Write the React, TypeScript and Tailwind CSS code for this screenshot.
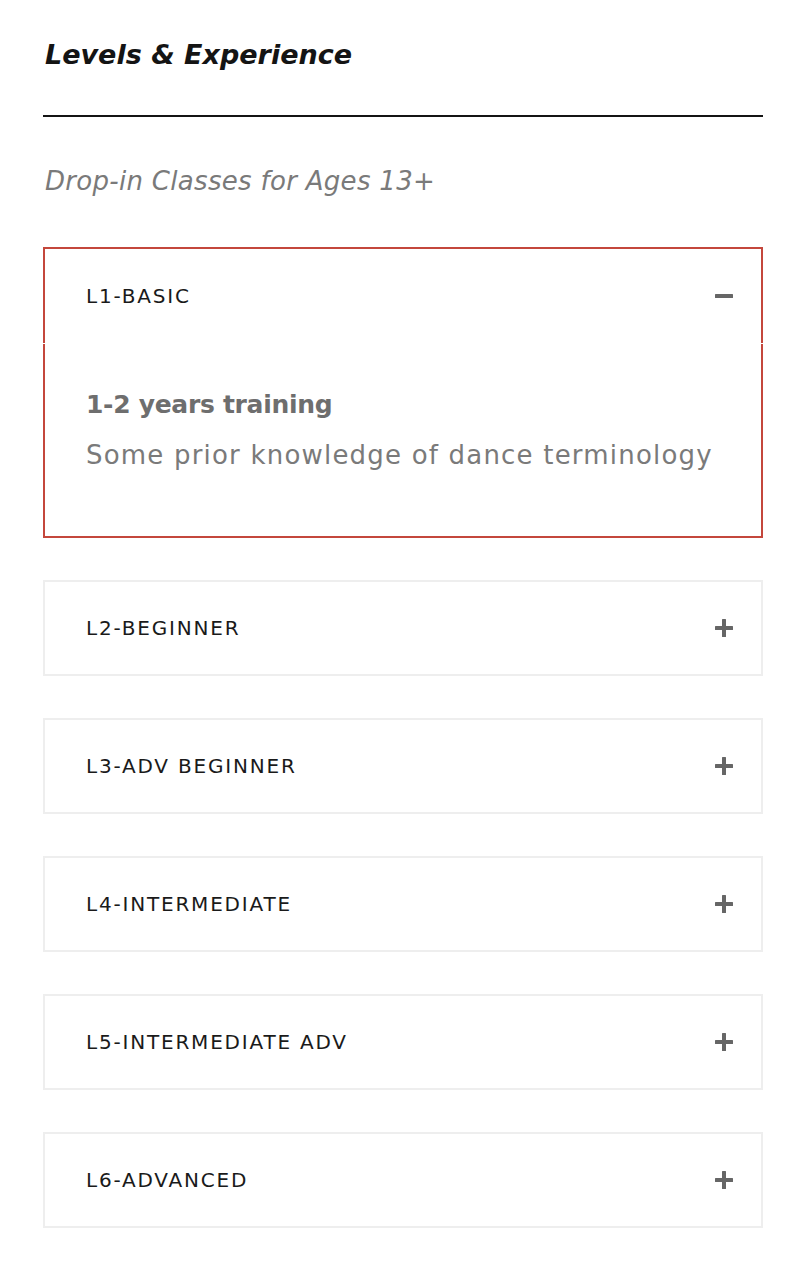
const levels = [
  'L1-BASIC',
  'L2-BEGINNER',
  'L3-ADV BEGINNER',
  'L4-INTERMEDIATE',
  'L5-INTERMEDIATE ADV',
  'L6-ADVANCED',
]

function PlusIcon({ open }: { open: boolean }) {
  return (
    <svg width="18" height="18" viewBox="0 0 18 18" className="shrink-0">
      <rect x="0" y="7" width="18" height="4" rx="0.5" fill="#666666" />
      {!open && <rect x="7" y="0" width="4" height="18" rx="0.5" fill="#666666" />}
    </svg>
  )
}

function Header({ label, open }: { label: string; open: boolean }) {
  return (
    <div
      className={`h-[96px] flex items-center justify-between pl-[41px] pr-[28px] border-2 ${
        open ? 'border-[#c4473c] border-b-0' : 'border-[#eeeeee]'
      }`}
    >
      <span className="text-[20px] text-[#1a1a1a] tracking-[1.8px]">{label}</span>
      <PlusIcon open={open} />
    </div>
  )
}

export default function App() {
  return (
    <div className="bg-white min-h-[1273px] pl-[43px] pr-[42px] pt-[37px]" style={{ fontFamily: '"DejaVu Sans", "Liberation Sans", sans-serif' }}>
      <h2 className="text-[27px] font-bold italic text-[#141414] leading-[36px] pl-[2px]">
        Levels &amp; Experience
      </h2>
      <div className="mt-[42px] h-[2px] bg-[#141414]" />
      <p className="mt-[47px] text-[26px] italic font-light text-[#7a7a7a] leading-[34px] pl-[2px] tracking-[0.3px]">
        Drop-in Classes for Ages 13+
      </p>

      <div className="mt-[49px] flex flex-col gap-[42px]">
        {levels.map((label, i) =>
          i === 0 ? (
            <div key={label}>
              <Header label={label} open />
              <div className="mt-px border-2 border-t-0 border-[#c4473c] pl-[41px] pr-[28px] pt-[42px] h-[194px]">
                <div className="text-[25px] font-bold text-[#6e6e6e] leading-[38px] tracking-[-0.3px]">1-2 years training</div>
                <div className="mt-[12px] text-[26px] text-[#7a7a7a] leading-[38px] tracking-[1.2px]">
                  Some prior knowledge of dance terminology
                </div>
              </div>
            </div>
          ) : (
            <Header key={label} label={label} open={false} />
          )
        )}
      </div>
    </div>
  )
}
